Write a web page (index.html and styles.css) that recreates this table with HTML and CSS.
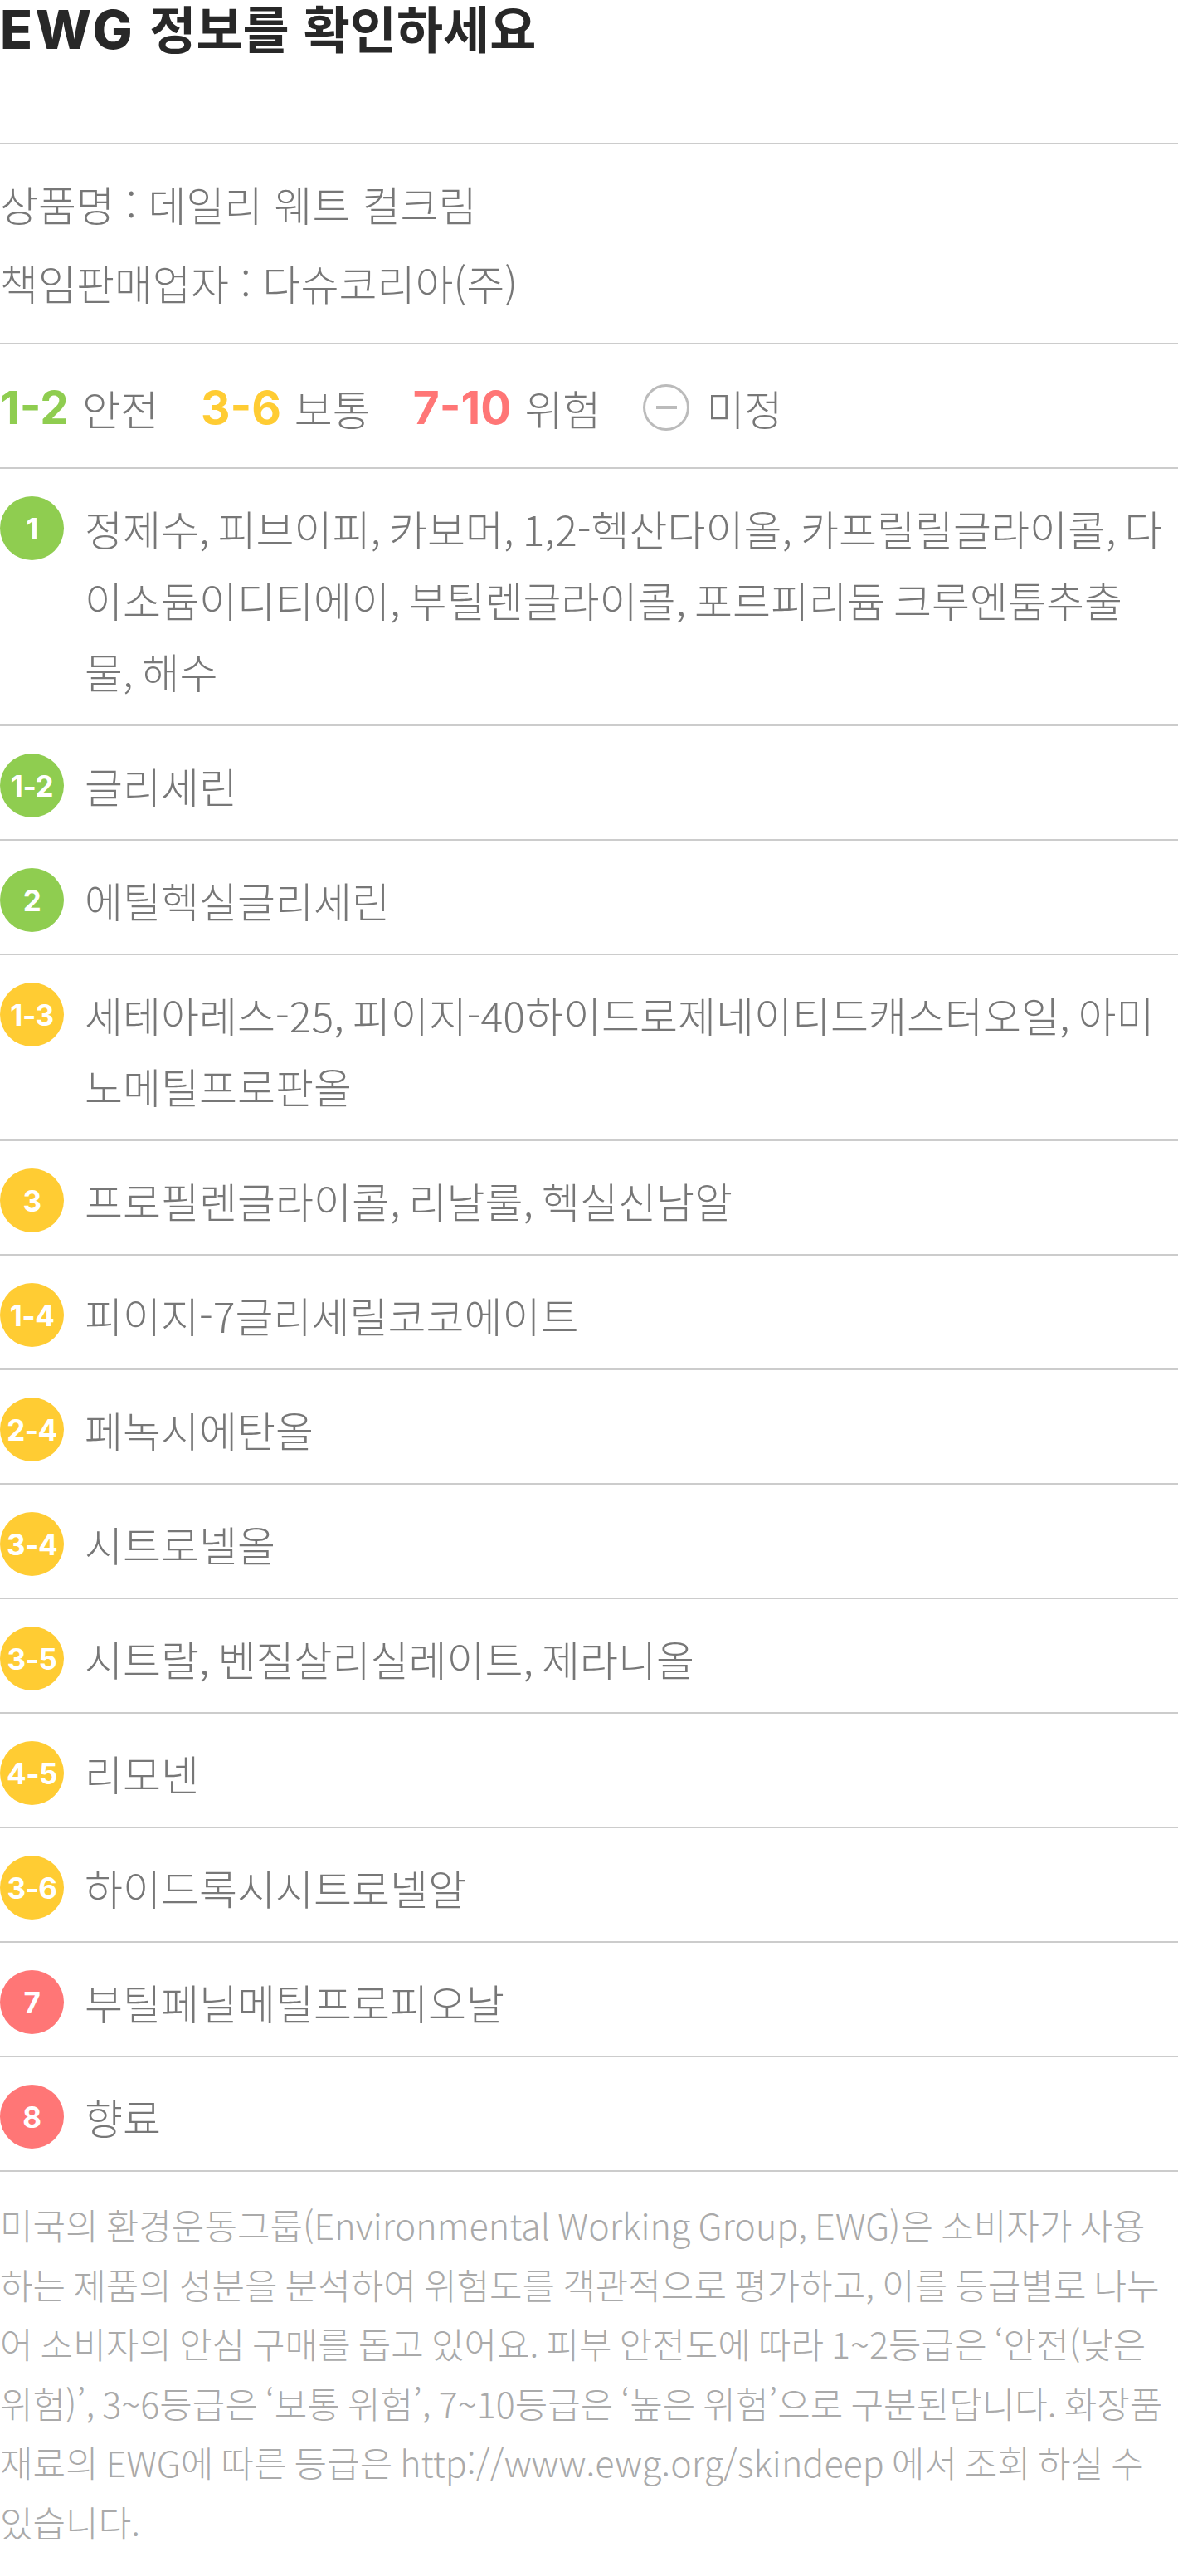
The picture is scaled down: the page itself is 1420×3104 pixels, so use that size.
FILE: index.html
```html
<!DOCTYPE html>
<html lang="ko">
<head>
<meta charset="utf-8">
<title>EWG 정보를 확인하세요</title>
<link rel="stylesheet" href="styles.css">
</head>
<body>
<div class="page">
  <h2 class="title"><span class="title-en">EWG</span> 정보를 확인하세요</h2>

  <div class="info">
    <p class="info-line">상품명 : 데일리 웨트 컬크림</p>
    <p class="info-line">책임판매업자 : 다슈코리아(주)</p>
  </div>

  <div class="legend">
    <span class="legend-item"><b class="num green">1-2</b><span class="label">안전</span></span>
    <span class="legend-item"><b class="num yellow">3-6</b><span class="label">보통</span></span>
    <span class="legend-item"><b class="num red">7-10</b><span class="label">위험</span></span>
    <span class="legend-item"><span class="undecided"><span class="dash"></span></span><span class="label">미정</span></span>
  </div>

  <ul class="list">
    <li class="row"><span class="badge green-bg">1</span><span class="names">정제수, 피브이피, 카보머, 1,2-헥산다이올, 카프릴릴글라이콜, 다이소듐이디티에이, 부틸렌글라이콜, 포르피리듐 크루엔툼추출물, 해수</span></li>
    <li class="row"><span class="badge green-bg">1-2</span><span class="names">글리세린</span></li>
    <li class="row"><span class="badge green-bg">2</span><span class="names">에틸헥실글리세린</span></li>
    <li class="row"><span class="badge yellow-bg">1-3</span><span class="names">세테아레스-25, 피이지-40하이드로제네이티드캐스터오일, 아미노메틸프로판올</span></li>
    <li class="row"><span class="badge yellow-bg">3</span><span class="names">프로필렌글라이콜, 리날룰, 헥실신남알</span></li>
    <li class="row"><span class="badge yellow-bg">1-4</span><span class="names">피이지-7글리세릴코코에이트</span></li>
    <li class="row"><span class="badge yellow-bg">2-4</span><span class="names">페녹시에탄올</span></li>
    <li class="row"><span class="badge yellow-bg">3-4</span><span class="names">시트로넬올</span></li>
    <li class="row"><span class="badge yellow-bg">3-5</span><span class="names">시트랄, 벤질살리실레이트, 제라니올</span></li>
    <li class="row"><span class="badge yellow-bg">4-5</span><span class="names">리모넨</span></li>
    <li class="row"><span class="badge yellow-bg">3-6</span><span class="names">하이드록시시트로넬알</span></li>
    <li class="row"><span class="badge red-bg">7</span><span class="names">부틸페닐메틸프로피오날</span></li>
    <li class="row"><span class="badge red-bg">8</span><span class="names">향료</span></li>
  </ul>

  <p class="note">미국의 환경운동그룹(Environmental Working Group, EWG)은 소비자가 사용하는 제품의 성분을 분석하여 위험도를 객관적으로 평가하고, 이를 등급별로 나누어 소비자의 안심 구매를 돕고 있어요. 피부 안전도에 따라 1~2등급은 ‘안전(낮은 위험)’, 3~6등급은 ‘보통 위험’, 7~10등급은 ‘높은 위험’으로 구분된답니다. 화장품 재료의 EWG에 따른 등급은 http://www.ewg.org/skindeep 에서 조회 하실 수 있습니다.</p>
</div>
</body>
</html>
```

FILE: styles.css
```css
html, body {
  margin: 0;
  padding: 0;
  background: #ffffff;
}

body {
  font-family: "Noto Sans CJK KR", "Noto Sans KR", sans-serif;
  color: #777777;
}

.page {
  width: 1420px;
}

.title {
  margin: 0;
  font-size: 61px;
  line-height: 66px;
  font-weight: 700;
  color: #282828;
  padding-bottom: 104px;
  border-bottom: 2px solid #cccccc;
  white-space: nowrap;
}

.title-en {
  font-family: Inter, "Noto Sans", sans-serif;
  font-size: 64px;
  font-weight: 800;
  line-height: 1;
  letter-spacing: 3.5px;
}

.info {
  padding: 24px 0 25px;
  border-bottom: 2px solid #cccccc;
}

.info-line {
  margin: 0;
  font-size: 50px;
  line-height: 95px;
  font-weight: 300;
  color: #777777;
}

.legend {
  box-sizing: border-box;
  display: flex;
  align-items: center;
  height: 150px;
  padding-top: 4px;
  border-bottom: 2px solid #cccccc;
  gap: 51px;
}

.legend-item {
  display: flex;
  align-items: center;
  gap: 16px;
}

.num {
  font-family: Inter, "Noto Sans", sans-serif;
  font-weight: 700;
  font-size: 55px;
  line-height: 1;
}

.label {
  font-size: 50px;
  font-weight: 300;
  line-height: 1;
  color: #777777;
}

.green { color: #8fcd50; }
.yellow { color: #ffcc33; }
.red { color: #ff7676; }

.green-bg { background: #8fcd50; }
.yellow-bg { background: #ffcc33; }
.red-bg { background: #ff7676; }

.undecided {
  box-sizing: border-box;
  width: 56px;
  height: 56px;
  border: 3px solid #bbbbbb;
  border-radius: 50%;
  display: flex;
  align-items: center;
  justify-content: center;
  margin-right: 4px;
}

.dash {
  width: 25px;
  height: 4px;
  background: #bbbbbb;
}

.list {
  list-style: none;
  margin: 0;
  padding: 0;
}

.row {
  display: flex;
  align-items: flex-start;
  gap: 25px;
  padding: 28px 14px 22px 0;
  border-bottom: 2px solid #cccccc;
}

.badge {
  flex: 0 0 77px;
  width: 77px;
  height: 77px;
  margin-top: 5px;
  border-radius: 50%;
  color: #ffffff;
  font-family: Inter, "Noto Sans", sans-serif;
  font-weight: 700;
  font-size: 35px;
  letter-spacing: -0.5px;
  display: flex;
  align-items: center;
  justify-content: center;
}

.names {
  flex: 1;
  font-size: 50px;
  line-height: 86px;
  font-weight: 300;
  word-spacing: -4px;
  color: #777777;
}

.note {
  margin: 0;
  padding: 28px 15px 29px 0;
  font-size: 43px;
  line-height: 71.5px;
  font-weight: 300;
  word-spacing: -3px;
  color: #aaaaaa;
}
```
